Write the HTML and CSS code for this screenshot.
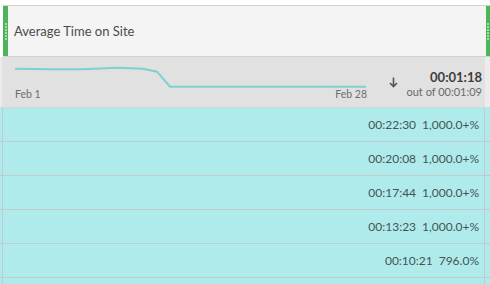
FILE: index.html
```html
<html>
  <head>
    <meta charset="UTF-8" />
    <title>Average Time on Site</title>
    <link rel="stylesheet" href="styles.css">
  </head>
  <body>
    <div class="metric-col">
      <div class="col-head">
        <span class="grip grip-left"><i></i><i></i><i></i><i></i><i></i><i></i></span>
        <span class="col-title">Average Time on Site</span>
        <span class="grip grip-right"><i></i><i></i><i></i><i></i><i></i><i></i></span>
      </div>

      <div class="summary">
        <div class="summary-inner">
          <div class="spark">
            <svg class="spark-line" width="352" height="24" viewBox="0 0 352 24">
              <polyline points="0,2.7 35,3.3 68,3.3 102,1.7 128,2.7 142,5.7 155,20.7 351,20.7"
                fill="none" stroke="#7fd0d1" stroke-width="2" />
            </svg>
            <div class="spark-dates">
              <span>Feb 1</span>
              <span>Feb 28</span>
            </div>
          </div>
          <svg class="sort-arrow" width="9" height="11" viewBox="0 0 9 11">
            <path d="M4.5 0.5 V9.5 M1 6 L4.5 9.5 L8 6" fill="none" stroke="#555" stroke-width="1.6" />
          </svg>
          <div class="totals">
            <div class="total">00:01:18</div>
            <div class="total-of">out of 00:01:09</div>
          </div>
        </div>
      </div>

      <div class="row"><div class="cell"><span>00:22:30</span><span class="pct">1,000.0+%</span></div></div>
      <div class="row"><div class="cell"><span>00:20:08</span><span class="pct">1,000.0+%</span></div></div>
      <div class="row"><div class="cell"><span>00:17:44</span><span class="pct">1,000.0+%</span></div></div>
      <div class="row"><div class="cell"><span>00:13:23</span><span class="pct">1,000.0+%</span></div></div>
      <div class="row"><div class="cell"><span>00:10:21</span><span class="pct">796.0%</span></div></div>
      <div class="row"><div class="cell"></div></div>
    </div>
  </body>
</html>
```

FILE: styles.css
```css
/* metric column */
body {
  margin: 0;
  width: 490px;
  height: 284px;
  overflow: hidden;
  background: white;
  font-family: Lato, "Liberation Sans", sans-serif;
  color: #4b4b4b;
}
.metric-col {
  padding-top: 5px;
}

/** header */
.col-head {
  display: flex;
  align-items: center;
  height: 50px;
  margin-left: 3px;
  background: #f4f4f4;
  border-top: 1px solid #d4d4d4;
  border-bottom: 1px solid #d0d0d0;
}
.col-title {
  flex: 1;
  padding-left: 6px;
  font-size: 13px;
  color: #4b4b4b;
}
.grip {
  display: flex;
  flex-direction: column;
  align-items: center;
  justify-content: center;
  gap: 1px;
  align-self: stretch;
  width: 5px;
  background: #4cb55a;
}
.grip-right {
  width: 4px;
}
.grip i {
  display: block;
  width: 2px;
  height: 2px;
  background: #a3dbab;
}

/** summary */
.summary {
  height: 50px;
  padding: 0 5px 0 2px;
  background: #ececec;
  border-bottom: 1px solid #cfd8d8;
}
.summary-inner {
  display: flex;
  align-items: flex-start;
  height: 100%;
  padding-left: 13px;
  background: #e1e1e1;
}
.spark {
  width: 352px;
  padding-top: 9px;
}
.spark-line {
  display: block;
}
.spark-dates {
  display: flex;
  justify-content: space-between;
  margin-top: -2px;
  font-size: 10.5px;
  color: #6e6e6e;
}
.sort-arrow {
  margin: 20px 0 0 22px;
}
.totals {
  flex: 1;
  padding: 12px 3px 0 0;
  text-align: right;
}
.total {
  font-size: 13px;
  font-weight: bold;
  color: #3e3e3e;
}
.total-of {
  font-size: 11px;
  color: #6a6a6a;
}

/** rows */
.row {
  padding: 0 5px 0 2px;
  background: #b0ebeb;
  border-bottom: 1px solid #c4c9c9;
}
.cell {
  display: flex;
  justify-content: flex-end;
  align-items: center;
  gap: 6px;
  height: 33px;
  padding-right: 5px;
  border-left: 1px solid #c4c9c9;
  border-right: 1px solid #c4c9c9;
  font-size: 12px;
  color: #435454;
}
```
